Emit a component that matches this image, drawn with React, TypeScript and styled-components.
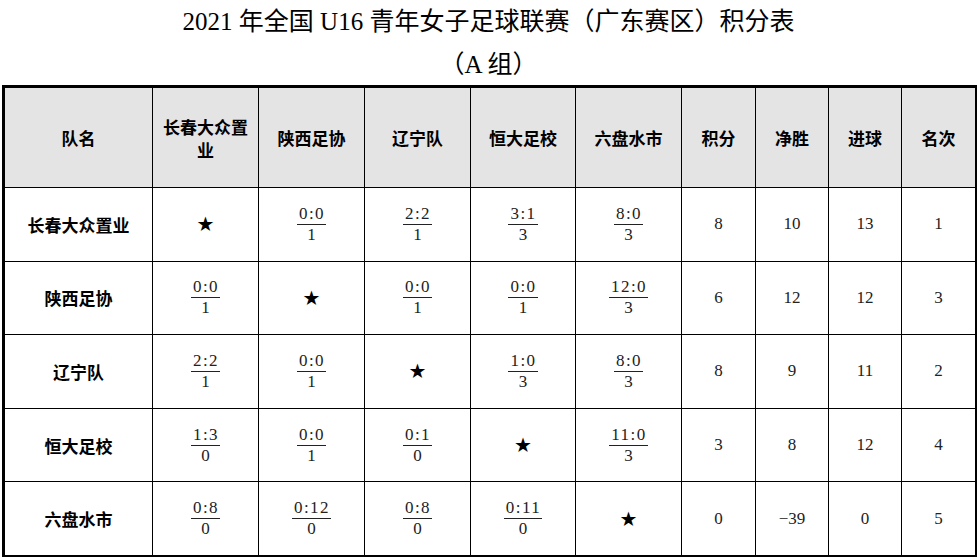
import React from 'react';
import styled, { createGlobalStyle } from 'styled-components';

const GlobalStyle = createGlobalStyle`
  body {
    margin: 0;
    background: #fff;
    font-family: 'Liberation Serif', 'Noto Sans CJK SC', serif;
    color: #000;
  }
`;

const Page = styled.div`
  width: 977px;
  padding: 0 2px;
  box-sizing: border-box;
`;

const Title = styled.h1`
  margin: 0;
  font-size: 25px;
  font-weight: normal;
  line-height: 44px;
  text-align: center;
  font-family: 'Liberation Serif', 'Noto Sans CJK SC', serif;
`;

const SubTitle = styled.h2`
  margin: 0;
  font-size: 25px;
  font-weight: normal;
  line-height: 41px;
  text-align: center;
  font-family: 'Liberation Serif', 'Noto Sans CJK SC', serif;
`;

const Table = styled.table`
  width: 973px;
  border-collapse: collapse;
  table-layout: fixed;
  border: 3px solid #000;
`;

const HeadCell = styled.th`
  height: 99px;
  padding: 0 6px;
  background: #e4e4e4;
  border: 1px solid #000;
  font-family: 'Noto Sans CJK SC', sans-serif;
  font-weight: bold;
  font-size: 17px;
  line-height: 23px;
  text-align: center;
  vertical-align: middle;
`;

const NameCell = styled.td`
  height: 72.6px;
  padding: 0;
  border: 1px solid #000;
  font-family: 'Noto Sans CJK SC', sans-serif;
  font-weight: bold;
  font-size: 17px;
  text-align: center;
  vertical-align: middle;
`;

const Cell = styled.td`
  height: 72.6px;
  padding: 0;
  border: 1px solid #000;
  font-family: 'Liberation Serif', serif;
  font-size: 17px;
  color: #222;
  text-align: center;
  vertical-align: middle;
`;

const Star = styled.span`
  font-family: 'DejaVu Sans', sans-serif;
  font-size: 20px;
  color: #000;
`;

const Fraction = styled.div`
  display: inline-flex;
  flex-direction: column;
  align-items: center;
  line-height: 20px;
`;

const Score = styled.span`
  padding: 0 1px 0 2px;
  border-bottom: 1px solid #222;
  letter-spacing: 1.5px;
`;

const Points = styled.span``;

type Result = { score: string; pts: string } | null;

type Row = {
  team: string;
  results: Result[];
  points: string;
  diff: string;
  goals: string;
  rank: string;
};

const teams = ['长春大众置业', '陕西足协', '辽宁队', '恒大足校', '六盘水市'];

const r = (score: string, pts: string): Result => ({ score, pts });

const rows: Row[] = [
  {
    team: '长春大众置业',
    results: [null, r('0:0', '1'), r('2:2', '1'), r('3:1', '3'), r('8:0', '3')],
    points: '8',
    diff: '10',
    goals: '13',
    rank: '1',
  },
  {
    team: '陕西足协',
    results: [r('0:0', '1'), null, r('0:0', '1'), r('0:0', '1'), r('12:0', '3')],
    points: '6',
    diff: '12',
    goals: '12',
    rank: '3',
  },
  {
    team: '辽宁队',
    results: [r('2:2', '1'), r('0:0', '1'), null, r('1:0', '3'), r('8:0', '3')],
    points: '8',
    diff: '9',
    goals: '11',
    rank: '2',
  },
  {
    team: '恒大足校',
    results: [r('1:3', '0'), r('0:0', '1'), r('0:1', '0'), null, r('11:0', '3')],
    points: '3',
    diff: '8',
    goals: '12',
    rank: '4',
  },
  {
    team: '六盘水市',
    results: [r('0:8', '0'), r('0:12', '0'), r('0:8', '0'), r('0:11', '0'), null],
    points: '0',
    diff: '−39',
    goals: '0',
    rank: '5',
  },
];

const colWidths = [149, 106, 106, 106, 105, 106, 74, 73, 73, 75];

export default function App() {
  return (
    <Page>
      <GlobalStyle />
      <Title>2021 年全国 U16 青年女子足球联赛（广东赛区）积分表</Title>
      <SubTitle>（A 组）</SubTitle>
      <Table>
        <colgroup>
          {colWidths.map((w, i) => (
            <col key={i} style={{ width: w }} />
          ))}
        </colgroup>
        <thead>
          <tr>
            <HeadCell>队名</HeadCell>
            {teams.map((t) => (
              <HeadCell key={t}>{t}</HeadCell>
            ))}
            <HeadCell>积分</HeadCell>
            <HeadCell>净胜</HeadCell>
            <HeadCell>进球</HeadCell>
            <HeadCell>名次</HeadCell>
          </tr>
        </thead>
        <tbody>
          {rows.map((row) => (
            <tr key={row.team}>
              <NameCell>{row.team}</NameCell>
              {row.results.map((res, i) => (
                <Cell key={i}>
                  {res ? (
                    <Fraction>
                      <Score>{res.score}</Score>
                      <Points>{res.pts}</Points>
                    </Fraction>
                  ) : (
                    <Star>★</Star>
                  )}
                </Cell>
              ))}
              <Cell>{row.points}</Cell>
              <Cell>{row.diff}</Cell>
              <Cell>{row.goals}</Cell>
              <Cell>{row.rank}</Cell>
            </tr>
          ))}
        </tbody>
      </Table>
    </Page>
  );
}
